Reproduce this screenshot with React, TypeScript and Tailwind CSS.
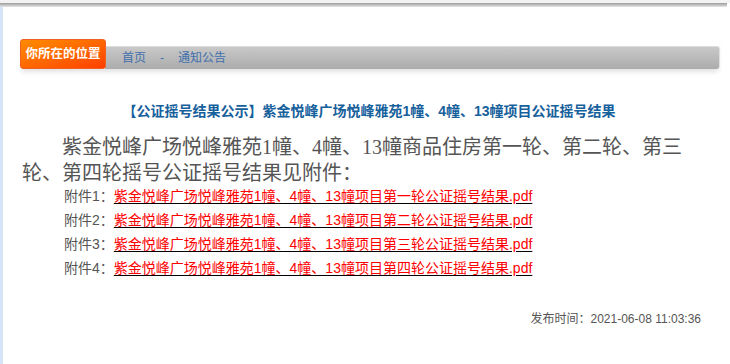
import React from "react";

const attachments = ["第一轮", "第二轮", "第三轮", "第四轮"];

export default function App() {
  return (
    <div className="w-[730px] h-[364px] overflow-hidden bg-white flex flex-col font-['Liberation_Sans','Noto_Sans_CJK_SC',sans-serif]">
      {/* top frame edge */}
      <div className="h-[3px] bg-[#f3f3f3] shrink-0" />
      <div className="h-[4px] bg-gradient-to-b from-[#9c9c9c] to-[#e6e6e6] shrink-0 mr-[3px]" />

      <div className="flex flex-1">
        <div className="w-[3px] bg-[#d5e5f7] shrink-0" />

        <div className="flex-1 flex flex-col">
          {/* breadcrumb */}
          <div className="flex items-end ml-[17px] mr-[10px] mt-[32px] shadow-[0_5px_5px_-2px_rgba(0,0,0,0.12)]">
            <div className="relative z-10 w-[86px] h-[30px] rounded-[3px] border border-[#f06020] bg-gradient-to-br from-[#ff8a00] to-[#ff3c00] flex items-center justify-center">
              <span className="text-[12.5px] font-bold text-white">你所在的位置</span>
            </div>
            <div className="flex-1 h-[23px] -ml-[1px] rounded-r-[3px] border-t border-[#dcdcdc] border-r border-r-[#e0e0e0] bg-gradient-to-b from-[#c8c8c8] to-[#acacac] flex items-center pl-[17px] gap-[14px] text-[12px] text-[#3f6fae]">
              <span>首页</span>
              <span>-</span>
              <span>通知公告</span>
            </div>
          </div>

          {/* title */}
          <h1 className="mt-[32px] pl-[5px] text-center text-[14px] leading-[20px] font-bold text-[#16609c]">
            【公证摇号结果公示】紫金悦峰广场悦峰雅苑1幢、4幢、13幢项目公证摇号结果
          </h1>

          <div className="ml-[19px] w-[679px] mt-[13px]">
            <p className="indent-[40px] text-[20px] leading-[26px] text-[#555] font-['Liberation_Serif','Noto_Sans_CJK_SC',serif]">
              紫金悦峰广场悦峰雅苑1幢、4幢、13幢商品住房第一轮、第二轮、第三轮、第四轮摇号公证摇号结果见附件：
            </p>

            <div className="pl-[42px] -mt-[2px]">
              {attachments.map((round, i) => (
                <div key={round} className="text-[14px] leading-[24px] text-[#555]">
                  附件{i + 1}：
                  <a href="#" className="text-[#ff0000] underline decoration-black underline-offset-[2px]">
                    紫金悦峰广场悦峰雅苑1幢、4幢、13幢项目{round}公证摇号结果.pdf
                  </a>
                </div>
              ))}
            </div>

            <div className="mt-[30px] text-right text-[12px] leading-[18px] text-[#555]">
              发布时间：2021-06-08 11:03:36
            </div>
          </div>
        </div>
      </div>
    </div>
  );
}
